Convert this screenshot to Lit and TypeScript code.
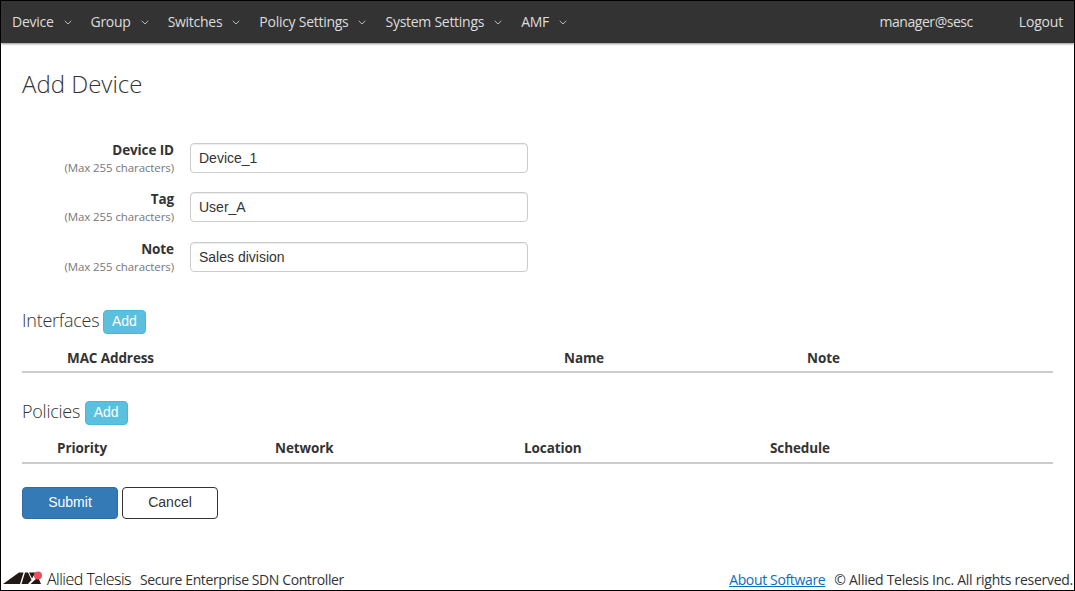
import { LitElement, css, html } from "lit";
import { customElement } from "lit/decorators.js";

const menus = ["Device", "Group", "Switches", "Policy Settings", "System Settings", "AMF"];
const fields = [
    { label: "Device ID", value: "Device_1" },
    { label: "Tag", value: "User_A" },
    { label: "Note", value: "Sales division" },
];

@customElement("app-root")
export class AppRoot extends LitElement {
    render() {return html`
        <nav>
            ${menus.map(m => html`
                <a class="menu">${m}
                    <svg width="8" height="5" viewBox="0 0 8 5"><path d="M.7.8 4 4 7.3.8" fill="none" stroke="#bbb" stroke-width="1"/></svg>
                </a>
            `)}
            <span class="user">manager@sesc</span>
            <a class="logout">Logout</a>
        </nav>

        <main>
            <h1>Add Device</h1>

            <form>
                ${fields.map(f => html`
                    <div class="row">
                        <label>
                            <b>${f.label}</b>
                            <small>(Max 255 characters)</small>
                        </label>
                        <input type="text" .value=${f.value}>
                    </div>
                `)}
            </form>

            <div class="section interfaces">
                <h2>Interfaces</h2>
                <button class="add">Add</button>
            </div>
            <div class="thead if-cols">
                <span>MAC Address</span><span>Name</span><span>Note</span>
            </div>

            <div class="section policies">
                <h2>Policies</h2>
                <button class="add">Add</button>
            </div>
            <div class="thead po-cols">
                <span>Priority</span><span>Network</span><span>Location</span><span>Schedule</span>
            </div>

            <div class="actions">
                <button class="submit">Submit</button>
                <button class="cancel">Cancel</button>
            </div>
        </main>

        <footer>
            <svg class="logo" width="41" height="14" viewBox="0 0 41 14">
                <path d="M0 13 16 1.500h4.500L17 13z" fill="#231815"/>
                <path d="M18.500 13 22 1.500h3L28.500 9 25 13z" fill="#231815"/>
                <path d="M26 1.500h6.500L29 7.500z" fill="#231815"/>
                <path d="M27.500 13 35 6l3 7z" fill="#231815"/>
                <circle cx="35" cy="4.500" r="4" fill="#e8505b"/>
            </svg>
            <span class="brand">Allied Telesis</span>
            <span class="product">Secure Enterprise SDN Controller</span>
            <span class="spring"></span>
            <a class="about">About Software</a>
            <span class="copy">© Allied Telesis Inc. All rights reserved.</span>
        </footer>
    `}

    static styles = css`
        :host {
            display: flex;
            flex-direction: column;
            box-sizing: border-box;
            height: 591px;
            border: 1px solid #000;
            background-color: white;
            color: #333;
            font-family: "Open Sans", sans-serif;
            font-size: 14px;
            overflow: hidden;
        }

        nav {
            flex: none;
            height: 42px;
            display: flex;
            align-items: center;
            padding: 0 11px 2px;
            box-sizing: border-box;
            background-color: #333;
            box-shadow: 0 1px 2px rgba(0, 0, 0, .45);
            color: #ddd;
            font-size: 14px;
            letter-spacing: -.27px;
        }
        .menu {
            display: flex;
            align-items: center;
            gap: 10px;
            margin-right: 19px;
        }
        .menu svg { margin-top: 3px; }
        .user { margin-left: auto; margin-right: 46px; letter-spacing: -.45px; }
        .logout { color: #ddd; letter-spacing: -.2px; }

        main {
            flex: 1;
            padding: 0 21px;
        }
        h1 {
            margin: 26px 0 44px;
            font-size: 24px;
            font-weight: 300;
            line-height: 30px;
        }
        form {
            display: flex;
            flex-direction: column;
            gap: 19.400px;
        }
        .row {
            height: 30px;
            display: flex;
            align-items: flex-start;
            gap: 16px;
        }
        label {
            width: 152px;
            margin-top: -2px;
            display: flex;
            flex-direction: column;
            align-items: flex-end;
        }
        b {
            font-size: 13.500px;
            font-weight: 700;
            line-height: 18px;
            letter-spacing: -.1px;
        }
        small {
            color: #777;
            font-size: 11.500px;
            line-height: 18px;
            letter-spacing: -.1px;
        }
        input {
            box-sizing: border-box;
            width: 338px;
            height: 30px;
            padding: 0 8px;
            border: 1px solid #ccc;
            border-radius: 4px;
            box-shadow: inset 0 1px 1px rgba(0, 0, 0, .075);
            color: #333;
            font-family: "Liberation Sans", sans-serif;
            font-size: 14px;
        }

        .section {
            display: flex;
            align-items: center;
            gap: 4px;
            height: 24px;
        }
        .interfaces { margin-top: 38px; }
        .policies { margin-top: 28px; gap: 5px; }
        h2 {
            margin: -3px 0 0;
            font-size: 18px;
            font-weight: 300;
            letter-spacing: -.25px;
        }
        button {
            box-sizing: border-box;
            border-radius: 4px;
            font-family: "Liberation Sans", sans-serif;
            font-size: 14px;
            cursor: pointer;
        }
        .add {
            width: 43px;
            height: 24px;
            padding: 0 1px 1px 0;
            border: 1px solid #46b8da;
            background-color: #5bc0de;
            color: white;
        }

        .thead {
            display: grid;
            height: 39px;
            align-items: center;
            box-sizing: border-box;
            padding-top: 11px;
            border-bottom: 2px solid #ccc;
            font-size: 13.500px;
            font-weight: 700;
            letter-spacing: -.1px;
        }
        .if-cols {
            grid-template-columns: 497px 243px 1fr;
            padding-left: 45px;
        }
        .po-cols {
            grid-template-columns: 218px 249px 246px 1fr;
            padding-left: 35px;
            padding-top: 9px;
        }

        .actions {
            display: flex;
            gap: 4px;
            margin-top: 23px;
        }
        .submit, .cancel {
            width: 96px;
            height: 32px;
            padding: 0 0 1px;
        }
        .submit {
            border: 1px solid #2e6da4;
            background-color: #337ab7;
            color: white;
        }
        .cancel {
            border: 1px solid #333;
            background-color: white;
            color: #333;
        }

        footer {
            flex: none;
            height: 22px;
            display: flex;
            align-items: center;
            padding: 0 1px 0 2px;
            font-size: 14px;
            letter-spacing: -.27px;
        }
        .logo { margin: -2px 3px 0 0; }
        .brand {
            margin-right: 9px;
            color: #000;
            font-size: 16px;
            font-weight: 300;
            letter-spacing: -.5px;
        }
        .product { letter-spacing: -.4px; }
        .spring { flex: 1; }
        .about {
            margin-right: 9px;
            color: #0a6ebd;
            letter-spacing: -.35px;
            text-decoration: underline;
        }
    `
}
